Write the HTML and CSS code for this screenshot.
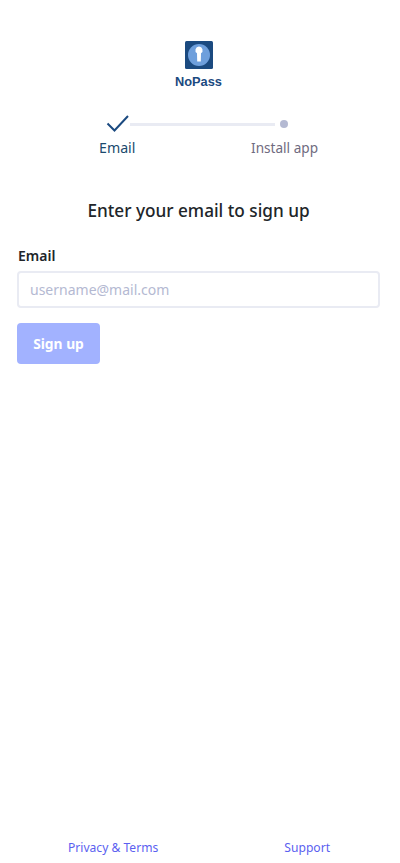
FILE: index.html
```html
<!DOCTYPE html>
<html lang="en">
<head>
    <meta charset="UTF-8">
    <meta name="viewport" content="width=device-width, initial-scale=1.0">
    <title>NoPass - Sign up</title>
    <link rel="stylesheet" href="styles.css">
</head>
<body>
    <div class="page">
        <div class="logo">
            <svg class="logo-mark" width="28" height="28" viewBox="0 0 28 28">
                <rect width="28" height="28" rx="1.5" fill="#1b4a80"/>
                <circle cx="14" cy="14" r="11" fill="#6e9fdc"/>
                <path d="M14 5.6a3.6 3.6 0 0 1 2 6.6l-.2 8.4h-3.6l-.2-8.4a3.6 3.6 0 0 1 2-6.6z" fill="#fff"/>
            </svg>
            <span class="logo-name">NoPass</span>
        </div>

        <div class="steps">
            <div class="step-track">
                <svg class="step-check" width="24" height="20" viewBox="0 0 24 20">
                    <path d="M1.5 9.5l7 7L22 2" fill="none" stroke="#1b4a80" stroke-width="2"/>
                </svg>
                <span class="step-line"></span>
                <span class="step-dot"></span>
            </div>
            <div class="step-labels">
                <span class="step-label current">Email</span>
                <span class="step-label">Install app</span>
            </div>
        </div>

        <h1>Enter your email to sign up</h1>

        <form class="signup">
            <label for="email">Email</label>
            <input id="email" type="text" placeholder="username@mail.com">
            <button type="button">Sign up</button>
        </form>

        <footer>
            <a href="#">Privacy &amp; Terms</a>
            <a href="#">Support</a>
        </footer>
    </div>
</body>
</html>
```

FILE: styles.css
```css
body {
    margin: 0;
    font-family: "Noto Sans", "Open Sans", sans-serif;
    background-color: #fff;
    color: #212529;
}
.page {
    display: flex;
    flex-direction: column;
    box-sizing: border-box;
    height: 863px;
    padding: 41px 20px 0 17px;
    overflow: hidden;
}
.logo {
    display: flex;
    flex-direction: column;
    align-items: center;
}
.logo-mark {
    display: block;
}
.logo-name {
    margin-top: 5px;
    font-family: "Liberation Sans", Arial, sans-serif;
    font-size: 12.8px;
    line-height: 15px;
    font-weight: bold;
    color: #1b4a80;
}
.steps {
    margin: 25px 0 0 65px;
    width: 236px;
}
.step-track {
    display: flex;
    align-items: center;
    height: 20px;
    padding-left: 24px;
}
.step-check {
    flex: none;
}
.step-line {
    flex: none;
    width: 145px;
    height: 3px;
    background-color: #e9ebf3;
}
.step-dot {
    flex: none;
    width: 8px;
    height: 8px;
    margin-left: 5px;
    border-radius: 50%;
    background-color: #b4b9d2;
}
.step-labels {
    display: flex;
    justify-content: space-between;
    margin-top: 4px;
    padding-left: 17px;
    font-size: 14px;
    line-height: 20px;
}
.step-label {
    color: #6f6b80;
    font-size: 13.6px;
}
.step-label.current {
    color: #1b4a6e;
    font-size: 14.2px;
}
h1 {
    margin: 39px 0 0;
    font-size: 17.2px;
    line-height: 28px;
    font-weight: 500;
    text-align: center;
}
.signup {
    display: flex;
    flex-direction: column;
    align-items: flex-start;
    margin-top: 21px;
}
label {
    font-size: 14px;
    line-height: 20px;
    font-weight: 600;
    padding-left: 1px;
}
input {
    box-sizing: border-box;
    width: 100%;
    height: 37px;
    margin-top: 5px;
    padding: 0 11px;
    border: 2px solid #e9ebf3;
    border-radius: 4px;
    font-family: inherit;
    font-size: 14px;
}
input::placeholder {
    color: #b4b9d2;
    opacity: 1;
}
button {
    width: 83px;
    height: 41px;
    margin-top: 15px;
    border: 0;
    border-radius: 4px;
    background-color: #a2b2ff;
    color: #fff;
    font-family: inherit;
    font-size: 13.8px;
    font-weight: 700;
}
footer {
    display: flex;
    justify-content: space-between;
    margin-top: auto;
    padding: 0 50px 3px 51px;
    height: 22px;
    line-height: 20px;
}
footer a {
    font-size: 12.1px;
    color: #5b5ff0;
    text-decoration: none;
}
```
